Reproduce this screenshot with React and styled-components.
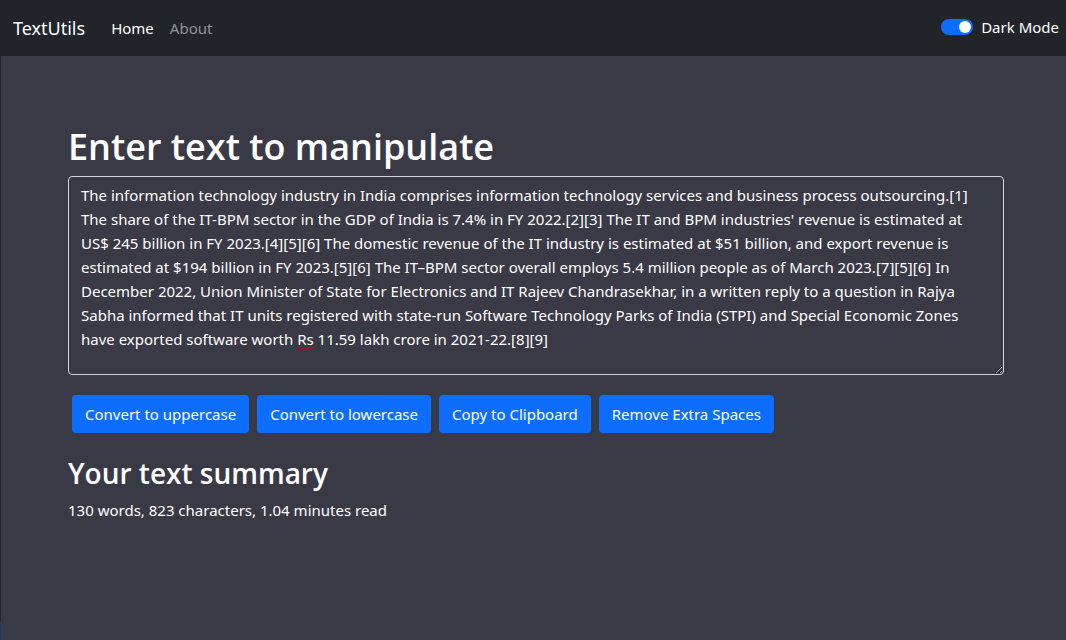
import React, { useState } from "react";
import styled, { createGlobalStyle } from "styled-components";

const GlobalStyle = createGlobalStyle`
  *, *::before, *::after { box-sizing: border-box; }
  body {
    margin: 0;
    background: #3a3946;
    color: #fff;
    font-family: "Noto Sans", "Open Sans", sans-serif;
    font-size: 15px;
    line-height: 24px;
  }
`;

const Page = styled.div`
  min-height: 100vh;
  padding-left: 1px;
  background: linear-gradient(#212529 0 621px, #0f4068 621px) left / 1px 100% no-repeat;
`;

const Navbar = styled.nav`
  display: flex;
  align-items: center;
  height: 56px;
  padding: 0 7px 0 12px;
  background: #212529;
`;

const Brand = styled.a`
  margin-right: 26px;
  color: #fff;
  font-size: 18px;
  line-height: 28px;
  text-decoration: none;
`;

const NavLinks = styled.div`
  display: flex;
  flex: 1;
  gap: 16px;
`;

const NavLink = styled.a`
  color: ${(p) => (p.$active ? "#fff" : "#909294")};
  text-decoration: none;
`;

const ModeSwitch = styled.label`
  display: flex;
  align-items: center;
  gap: 8px;
  padding-bottom: 2px;
`;

const Toggle = styled.input`
  appearance: none;
  width: 32px;
  height: 16px;
  margin: 0;
  border-radius: 16px;
  background: ${(p) => (p.checked ? "#0d6efd" : "#6c757d")};

  &::before {
    content: "";
    display: block;
    width: 12px;
    height: 12px;
    margin: 2px;
    margin-left: ${(p) => (p.checked ? "18px" : "2px")};
    border-radius: 50%;
    background: #fff;
  }
`;

const Main = styled.main`
  padding: 67px 62px 48px 67px;
`;

const Title = styled.h1`
  margin: 0 0 5px;
  font-family: "Open Sans", "Noto Sans", sans-serif;
  font-size: 36px;
  font-weight: 600;
  line-height: 48px;
`;

const Editor = styled.div`
  position: relative;
`;

const SpellingMark = styled.svg`
  position: absolute;
  left: 229px;
  top: 170px;
  pointer-events: none;
`;

const TextBox = styled.textarea`
  display: block;
  width: 100%;
  height: 199px;
  padding: 6px 24px 6px 12px;
  border: 1px solid #ced4da;
  border-radius: 4px;
  background: transparent;
  color: #fff;
  font: inherit;
  resize: vertical;
  outline: none;
`;

const Actions = styled.div`
  display: flex;
  flex-wrap: wrap;
  gap: 8px;
  padding: 20px 4px 16px;
`;

const Button = styled.button`
  height: 38px;
  padding: 0 13px;
  border: 0;
  border-radius: 4px;
  background: #0d6efd;
  color: #fff;
  font: inherit;
`;

const SummaryTitle = styled.h2`
  margin: 4px 0 5px;
  font-family: "Open Sans", "Noto Sans", sans-serif;
  font-size: 28px;
  font-weight: 600;
  line-height: 40px;
`;

const Summary = styled.p`
  margin: 0;
`;

const SAMPLE =
  "The information technology industry in India comprises information technology services and business process outsourcing.[1] The share of the IT-BPM sector in the GDP of India is 7.4% in FY 2022.[2][3] The IT and BPM industries' revenue is estimated at US$ 245 billion in FY 2023.[4][5][6] The domestic revenue of the IT industry is estimated at $51 billion, and export revenue is estimated at $194 billion in FY 2023.[5][6] The IT–BPM sector overall employs 5.4 million people as of March 2023.[7][5][6] In December 2022, Union Minister of State for Electronics and IT Rajeev Chandrasekhar, in a written reply to a question in Rajya Sabha informed that IT units registered with state-run Software Technology Parks of India (STPI) and Special Economic Zones have exported software worth Rs 11.59 lakh crore in 2021-22.[8][9]";

export default function App() {
  const [text, setText] = useState(SAMPLE);
  const [dark, setDark] = useState(true);

  return (
    <>
      <GlobalStyle />
      <Page>
        <Navbar>
          <Brand href="#">TextUtils</Brand>
          <NavLinks>
            <NavLink href="#" $active>Home</NavLink>
            <NavLink href="#about">About</NavLink>
          </NavLinks>
          <ModeSwitch>
            <Toggle
              type="checkbox"
              role="switch"
              checked={dark}
              onChange={(e) => setDark(e.target.checked)}
            />
            Dark Mode
          </ModeSwitch>
        </Navbar>
        <Main>
          <Title id="editor-title">Enter text to manipulate</Title>
          <Editor>
            <TextBox
              aria-labelledby="editor-title"
              spellCheck={false}
              value={text}
              onChange={(e) => setText(e.target.value)}
            />
            {text === SAMPLE && (
              <SpellingMark width="17" height="4" viewBox="0 0 17 4" aria-hidden="true">
                <path
                  d="M0 1l2 2 2-2 2 2 2-2 2 2 2-2 2 2 2-2"
                  fill="none"
                  stroke="#e00000"
                />
              </SpellingMark>
            )}
          </Editor>
          <Actions>
            <Button type="button" onClick={() => setText(text.toUpperCase())}>Convert to uppercase</Button>
            <Button type="button" onClick={() => setText(text.toLowerCase())}>Convert to lowercase</Button>
            <Button type="button" onClick={() => navigator.clipboard.writeText(text)}>Copy to Clipboard</Button>
            <Button type="button" onClick={() => setText(text.split(/ +/).join(" "))}>Remove Extra Spaces</Button>
          </Actions>
          <SummaryTitle>Your text summary</SummaryTitle>
          <Summary>130 words, 823 characters, 1.04 minutes read</Summary>
        </Main>
      </Page>
    </>
  );
}
